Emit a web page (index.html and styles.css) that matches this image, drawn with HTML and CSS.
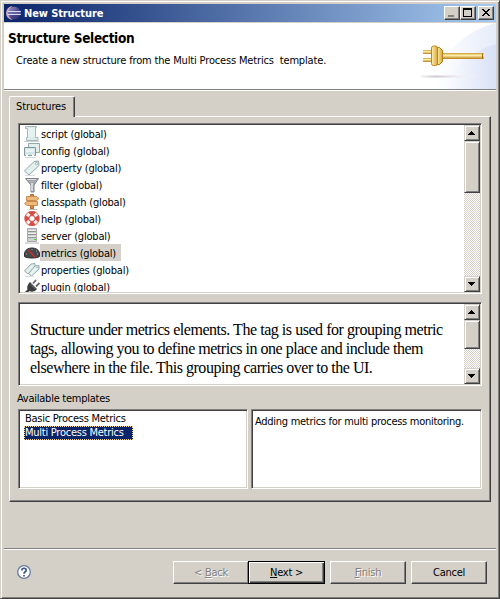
FILE: index.html
```html
<!DOCTYPE html>
<html lang="en">
<head>
<meta charset="utf-8">
<title>New Structure</title>
<link rel="stylesheet" href="styles.css">
</head>
<body>
<div class="window">
  <div class="titlebar">
    <svg class="app-icon" width="16" height="16" viewBox="0 0 16 16">
      <defs><linearGradient id="ball" x1="0" y1="0" x2="1" y2="1"><stop offset="0" stop-color="#a9a2cf"/><stop offset=".5" stop-color="#514c91"/><stop offset="1" stop-color="#29246b"/></linearGradient></defs>
      <path d="M7 1A7 7 0 0 0 7 15A8 8 0 0 1 7 1Z" fill="#cfa9b3"/>
      <circle cx="8.3" cy="8" r="6.3" fill="url(#ball)"/>
      <path d="M2 6.5H14.8M1.5 9.5H14.8" stroke="#d9dcf0" stroke-width="1"/>
      <path d="M2 8H15" stroke="#7472b1" stroke-width="1"/>
    </svg>
    <h1 class="title">New Structure</h1>
    <div class="caption-buttons">
      <button class="cap"><svg width="14" height="12" shape-rendering="crispEdges"><path d="M3 8h6v2H3z" fill="#808080"/></svg></button>
      <button class="cap"><svg width="14" height="12" shape-rendering="crispEdges"><path d="M2 1h9v9H2zM3 3v6h7V3z" fill-rule="evenodd"/></svg></button>
      <button class="cap close"><svg width="14" height="12" shape-rendering="crispEdges"><path d="M3 2h2v1h1v1h2V3h1V2h2v1h-1v1H9v1H8v1h1v1h1v1h1v1H9V8H8V7H6v1H5v1H3V8h1V7h1V6h1V5H5V4H4V3H3z"/></svg></button>
    </div>
  </div>
  <header class="banner">
    <div class="banner-text">
      <h2>Structure Selection</h2>
      <p>Create a new structure from the Multi Process Metrics&nbsp; template.</p>
    </div>
    <svg class="plug-art" width="76" height="66" viewBox="420 23 76 66">
      <defs>
        <linearGradient id="sky" gradientUnits="userSpaceOnUse" x1="435" x2="496"><stop offset="0" stop-color="#fff"/><stop offset="1" stop-color="#e6ecfa"/></linearGradient>
        <linearGradient id="sky2" gradientUnits="userSpaceOnUse" x1="450" x2="496"><stop offset="0" stop-color="#e9eefc" stop-opacity="0"/><stop offset="1" stop-color="#d9e1f7"/></linearGradient>
        <linearGradient id="cord" x1="0" x2="0" y1="0" y2="1"><stop offset="0" stop-color="#c99d34"/><stop offset=".4" stop-color="#fff0ad"/><stop offset="1" stop-color="#b87d13"/></linearGradient>
        <linearGradient id="brass" x1="0" x2="1"><stop offset="0" stop-color="#fff1b0"/><stop offset="1" stop-color="#d9a738"/></linearGradient>
        <linearGradient id="shade"><stop offset="0" stop-color="#eeebf0"/><stop offset=".25" stop-color="#cfc8d3"/><stop offset="1" stop-color="#fff" stop-opacity="0"/></linearGradient>
      </defs>
      <path d="M496 23C466 30 439 55 430 89H496Z" fill="url(#sky)"/>
      <path d="M496 44C470 51 450 68 444 89H496Z" fill="url(#sky2)"/>
      <path d="M421 75h60v3h-60z" fill="url(#shade)" opacity=".6"/><path d="M424 76h50v1h-50z" fill="url(#shade)"/>
      <rect x="423" y="50" width="9" height="4" fill="url(#cord)"/><rect x="423" y="58" width="9" height="4" fill="url(#cord)"/>
      <rect x="442" y="53" width="42" height="6" rx="1" fill="url(#cord)"/>
      <path d="M437 47.500h2.500l3 3v11l-3 3H437z" fill="url(#brass)" stroke="#b57b14"/>
      <rect x="431.500" y="46" width="6" height="19.500" rx="2" fill="url(#brass)" stroke="#bc861e"/>
      <path d="M482.500 53.500v5" stroke="#a86d10"/>
    </svg>
  </header>

  <main class="content">
    <div class="tab">Structures</div>
    <section class="page">
      <div class="sunken structures">
        <ul class="items">
          <li><svg width="16" height="16" viewBox="0 0 16 16"><path d="M1.500.500h11v1h-1v10h2.500v3H2.500v-3h1v-9h-2z" fill="#dcebea" stroke="#a3b8b7"/><path d="M4 2h7v9H4z" fill="#e6f2f1"/><path d="M0 15.500h15" stroke="#cbd0d0"/></svg><span>script (global)</span></li>
          <li><svg width="16" height="16" viewBox="0 0 16 16"><path d="M4.500.500h11v9h-11z" fill="#e2eeee" stroke="#93a9a9"/><path d="M.5 4.500h11v8H.5z" fill="#d3e4e5" stroke="#819a9b"/><path d="M2 12.500h2M8 12.500h2" stroke="#fff" stroke-width="2"/><path d="M1 14.500h11" stroke="#d5d8d8"/><path d="M2 6h8v3H2z" fill="#e9f3f3"/></svg><span>config (global)</span></li>
          <li><svg width="16" height="16" viewBox="0 0 16 16"><path d="M.5 11L10 1.500l4.500-.5.5 4.500L5 15z" fill="#e2f0ef" stroke="#91a7a8"/><circle cx="12.500" cy="3.500" r="1.200" fill="#fff" stroke="#8a9d9f" stroke-width=".7"/><path d="M1 15.500h10" stroke="#ddd"/></svg><span>property (global)</span></li>
          <li><svg width="16" height="16" viewBox="0 0 16 16"><path d="M1.500 1.500h13L10 8v7H7V8z" fill="#a8abb3" stroke="#7d8189"/><path d="M3 2.500h9" stroke="#ddd"/><path d="M8 6v8" stroke="#e6e8ed" stroke-width="1.500"/></svg><span>filter (global)</span></li>
          <li><svg width="16" height="16" viewBox="0 0 16 16"><path d="M6.500.500h3v14h-3z" fill="#d98c43" stroke="#ad692e"/><path d="M2.500 2.500h10l2.500 2-2.500 2h-10zM13.500 7.500H3L.500 9.500 3 11.500h10.500z" fill="#efb97b" stroke="#c98a4e"/><path d="M5 15.500h8" stroke="#cbb"/></svg><span>classpath (global)</span></li>
          <li><svg width="16" height="16" viewBox="0 0 16 16"><circle cx="8" cy="7.500" r="5" fill="none" stroke="#d84a3f" stroke-width="5"/><path d="M2 2l3.500 3M14 2l-3.500 3M2 13.500l3.500-3.500M14 13.500l-3.500-3.500" stroke="#f7eeee" stroke-width="3.500"/><circle cx="8" cy="7.500" r="7.200" fill="none" stroke="#cc6860" stroke-width=".8"/><circle cx="8" cy="7.500" r="2.800" fill="#fff" stroke="#ba554f" stroke-width=".6"/></svg><span>help (global)</span></li>
          <li><svg width="16" height="16" viewBox="0 0 16 16"><path d="M3.500.500h9v13h-9z" fill="#cfd0d0" stroke="#aaa"/><path d="M4 3.500h8M4 6.500h8M4 9.500h8" stroke="#909292"/><path d="M4 2.500h8M4 5.500h8M4 8.500h8" stroke="#eee"/><path d="M10 11h2v1h-2z" fill="#2fe32f"/><path d="M1 15h14" stroke="#bbb"/></svg><span>server (global)</span></li>
          <li class="selected"><svg width="16" height="16" viewBox="0 0 16 16"><path d="M.5 9C.5 1 15.500 1 15.500 9v2.500c-2 2-13 2-15 0z" fill="#48494c" stroke="#303033"/><path d="M2 9h1M4 5.500h1M8 4v1M12 6h1M13 9h1" stroke="#aaa"/><path d="M4 5l7 7" stroke="#d62b30" stroke-width="1.300"/></svg><span>metrics (global)</span></li>
          <li><svg width="16" height="16" viewBox="0 0 16 16"><path d="M.5 9L7 2l4-.5V5L4 12z" fill="#e1efee" stroke="#92a9aa"/><path d="M4.500 11.500L11 4l4-.5V7l-7.500 7z" fill="#e8f4f3" stroke="#8ba5a7"/><path d="M1 14.500h9" stroke="#ddd"/><circle cx="13" cy="5.500" r=".7" fill="#8ba0a1"/></svg><span>properties (global)</span></li>
          <li><svg width="16" height="16" viewBox="0 0 16 16"><path d="M9 4.500L12 1M12 7.500L15.500 4" stroke="#666" stroke-width="1.800"/><path d="M6 3l7 7-2 2c-3 1-4 1-5.500 0L2 15H0v-1l3.500-3.500C2.500 8 4 5 6 3z" fill="#3b3c3e"/><path d="M6.500 5l5 5" stroke="#777"/></svg><span>plugin (global)</span></li>
        </ul>
        <div class="scroll"><i class="arrow up"></i><i class="thumb long"></i><i class="track"></i><i class="arrow down"></i></div>
      </div>
      <div class="sunken description">
        <p><span class="l1">Structure under metrics elements. The tag is used for grouping metric</span><br><span class="l2">tags, allowing you to define metrics in one place and include them</span><br><span class="l3">elsewhere in the file. This grouping carries over to the UI.</span></p>
        <div class="scroll"><i class="arrow up"></i><i class="thumb short"></i><i class="track"></i><i class="arrow down"></i></div>
      </div>
      <div class="label">Available templates</div>
      <div class="templates">
        <ul class="sunken choices"><li>Basic Process Metrics</li><li class="active">Multi Process Metrics</li></ul>
        <div class="sunken detail">Adding metrics for multi process monitoring.</div>
      </div>
    </section>
  </main>

  <footer class="footer">
    <svg class="help" width="14" height="14" viewBox="0 0 14 14"><circle cx="7" cy="7" r="6.300" fill="#fff" stroke="#657ba2" stroke-width="1.300"/><path d="M4.800 5.400C4.800 2.500 9.300 2.600 9.200 5.200C9.200 6.800 7 6.800 7 8.700M7 10v1.600" fill="none" stroke="#3e5784" stroke-width="1.700"/></svg>
    <div class="actions">
      <button class="btn disabled"><span>&lt; <u>B</u>ack</span></button>
      <button class="btn default"><span><u>N</u>ext &gt;</span></button>
      <button class="btn disabled finish"><span><u>F</u>inish</span></button>
      <button class="btn cancel"><span>Cancel</span></button>
    </div>
  </footer>
</div>
</body>
</html>
```
FILE: styles.css
```css
* { box-sizing: border-box; }
body {
  margin: 0;
  background: #d4d0c8;
  color: #000;
  font: 11px/13px "DejaVu Sans Condensed", "DejaVu Sans", sans-serif;
  font-stretch: condensed;
  letter-spacing: -0.25px;
}
h1, h2, p, ul { margin: 0; padding: 0; }
ul { list-style: none; }
svg { display: block; flex: none; }
button { font: inherit; letter-spacing: inherit; color: inherit; padding: 0; border: 0; background: #d4d0c8; border-radius: 0; }

.window {
  width: 500px;
  height: 599px;
  padding: 3px 2px 1px 3px;
  border: 1px solid;
  border-color: #d4d0c8 #404040 #404040 #d4d0c8;
  box-shadow: inset 1px 1px #fff, inset -1px -1px #808080;
  display: flex;
  flex-direction: column;
}
.titlebar {
  height: 18px;
  width: 492px;
  display: flex;
  align-items: center;
  padding: 0 2px;
  background: linear-gradient(90deg, #0a246a, #a6caf0);
}
.title { flex: 1; margin-left: 2px; color: #fff; font-size: 11px; font-weight: bold; letter-spacing: -0.1px; }
.caption-buttons { display: flex; }
.cap {
  width: 16px;
  height: 14px;
  border: 1px solid;
  border-color: #fff #404040 #404040 #fff;
  box-shadow: inset -1px -1px #808080;
}
.close { margin-left: 2px; }

.banner {
  margin-top: 1px;
  width: 492px;
  height: 68px;
  display: flex;
  justify-content: space-between;
  background: #fff;
  border-bottom: 1px solid #fff;
  box-shadow: inset 0 -1px #808080;
}
.banner-text { padding: 7px 0 0 4px; }
.banner h2 { font-size: 13.500px; line-height: 16px; letter-spacing: -0.350px; }
.banner p { padding: 8px 0 0 8px; letter-spacing: -0.160px; }

.content { padding: 5px 6px 0 5px; width: 492px; }
.tab {
  position: relative;
  width: 66px;
  height: 21px;
  padding: 3px 0 0 6px;
  margin-bottom: -1px;
  background: #d4d0c8;
  border: solid;
  border-width: 1px 1px 0;
  border-color: #fff #404040 #fff #fff;
  border-radius: 2px 2px 0 0;
  box-shadow: inset -1px 0 #808080;
  letter-spacing: -0.100px;
}
.page {
  width: 482px;
  height: 386px;
  padding: 6px 7px 0 8px;
  border: 1px solid;
  border-color: #fff #404040 #404040 #fff;
  box-shadow: inset -1px -1px #808080;
}
.sunken {
  background: #fff;
  border: 1px solid;
  border-color: #808080 #fff #fff #808080;
  box-shadow: inset 1px 1px #404040, inset -1px -1px #d4d0c8;
  padding: 1px;
}
.structures { display: flex; width: 464px; height: 171px; }
.items { flex: 1; overflow: hidden; padding-left: 4px; letter-spacing: -0.190px; }
.items li { height: 17px; display: flex; align-items: center; }
.items span { height: 17px; line-height: 19px; padding: 0 5px 0 1px; }
.selected span { background: #d4d0c8; }

.scroll { width: 16px; display: flex; flex-direction: column; flex: none; }
.arrow, .thumb {
  display: block;
  background: #d4d0c8;
  border: 1px solid;
  border-color: #d4d0c8 #404040 #404040 #d4d0c8;
  box-shadow: inset 1px 1px #fff, inset -1px -1px #808080;
}
.arrow { height: 16px; padding: 5px 0 0 3px; }
.arrow::before {
  content: "";
  display: block;
  width: 7px;
  height: 4px;
  background: #000;
  clip-path: polygon(3px 0, 4px 0, 4px 1px, 5px 1px, 5px 2px, 6px 2px, 6px 3px, 7px 3px, 7px 4px, 0 4px, 0 3px, 1px 3px, 1px 2px, 2px 2px, 2px 1px, 3px 1px);
}
.down::before { transform: scaleY(-1); }
.long { height: 52px; }
.short { height: 29px; }
.track { flex: 1; background: repeating-conic-gradient(#d4d0c8 0 25%, #fff 0 50%) 0 0 / 2px 2px; }

.description { display: flex; justify-content: space-between; width: 464px; height: 84px; margin-top: 8px; }
.description p {
  padding: 16px 0 0 10px;
  font: 16px/19px "Liberation Serif", serif;
  letter-spacing: -0.480px;
  white-space: nowrap;
}
.description .l1 { letter-spacing: -0.460px; }
.label { margin: 6px 0 4px -1px; }
.templates { display: flex; gap: 3px; }
.choices { width: 230px; height: 80px; padding: 2px 0 0 5px; }
.choices li { width: 109px; height: 14px; padding-left: 1px; line-height: 14px; }
.choices .active { background: #0a246a; color: #fff; outline: 1px dotted #f5db95; outline-offset: -1px; }
.detail { width: 231px; height: 80px; padding: 5px 0 0 3px; letter-spacing: -0.280px; }

.footer {
  margin-top: 46px;
  width: 492px;
  height: 49px;
  border-top: 1px solid #808080;
  box-shadow: inset 0 1px #fff;
  display: flex;
  justify-content: space-between;
  padding: 12px 9px 0 13px;
}
.help { margin-top: 4px; }
.actions { display: flex; }
.btn {
  width: 76px;
  height: 23px;
  border: 1px solid;
  border-color: #fff #404040 #404040 #fff;
  box-shadow: inset -1px -1px #808080;
}
.default { width: 77px; margin-left: -1px; border-color: #000; box-shadow: inset 1px 1px #fff, inset -1px -1px #404040, inset -2px -2px #808080; }
.finish, .cancel { margin-left: 5px; }
.disabled { color: #808080; text-shadow: 1px 1px #fff; }
```
